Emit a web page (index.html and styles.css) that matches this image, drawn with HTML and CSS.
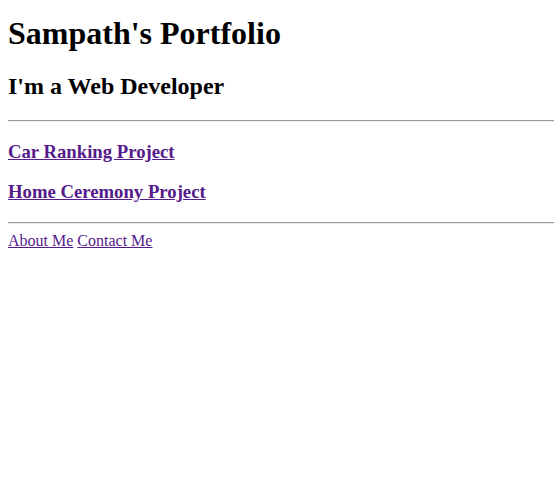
FILE: index.html
```html
<!DOCTYPE html>
<html>
<head>
<meta charset="utf-8">
<title>Sampath's Portfolio</title>
<link rel="stylesheet" href="styles.css">
</head>
<body>
<h1 class="title">Sampath's Portfolio</h1>
<h2 class="subtitle">I'm a Web Developer</h2>
<hr class="rule">
<h3 class="project"><a class="link" href="#car">Car Ranking Project</a></h3>
<h3 class="project"><a class="link" href="#home">Home Ceremony Project</a></h3>
<hr class="rule">
<a class="link" href="#about">About Me</a>
<a class="link" href="#contact">Contact Me</a>
</body>
</html>
```
FILE: styles.css
```css
body {
  margin: 8px 0 8px 8px;
  font-family: "Liberation Serif", "Times New Roman", serif;
  color: #000;
  background: #fff;
}
.title {
  font-size: 2em;
  margin: 6.5px 0 0.67em;
}
.subtitle {
  font-size: 1.5em;
  margin: 0.83em 0;
}
.project {
  font-size: 1.17em;
  margin: 1em 0;
}
.rule {
  margin: 8px 0;
  border: 0;
  border-top: 1px solid #9a9a9a;
  border-bottom: 1px solid #eee;
  height: 0;
}
.link {
  color: #551a8b;
  text-decoration: underline;
}
```
